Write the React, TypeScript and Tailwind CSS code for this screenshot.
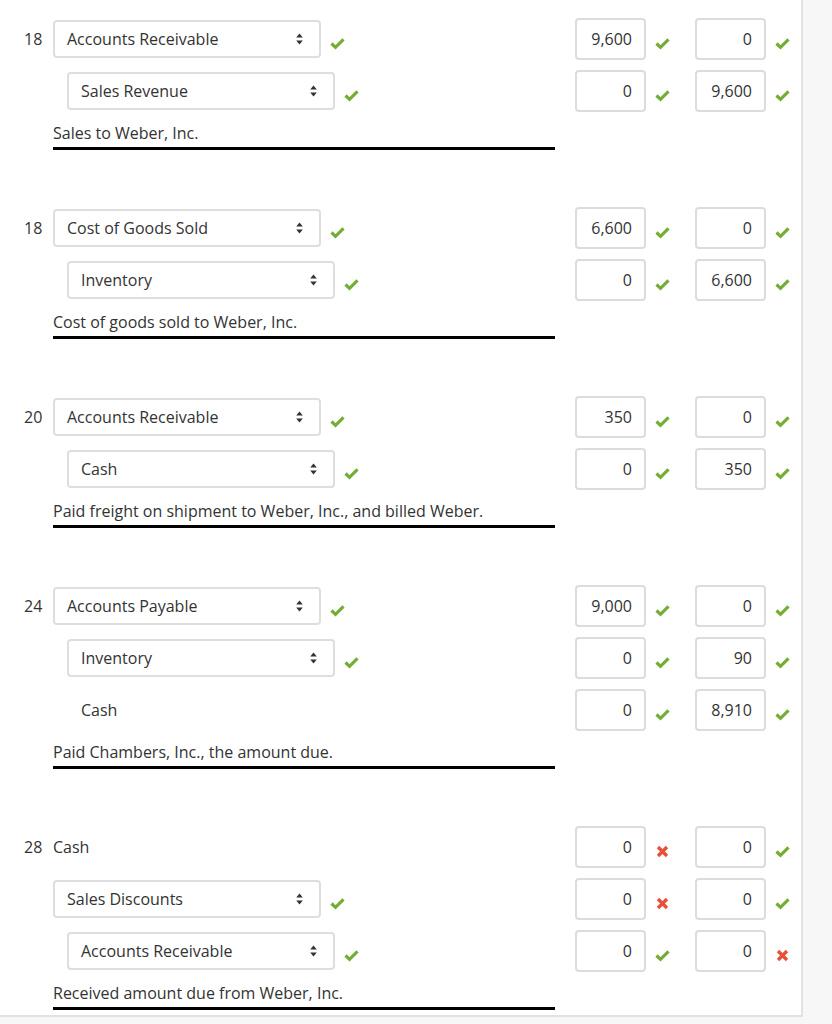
type Mark = "ok" | "bad";

type Line = {
  account: string;
  indent?: boolean;
  select?: boolean;
  accountMark?: Mark;
  debit: string;
  debitMark: Mark;
  credit: string;
  creditMark: Mark;
};

type Entry = {
  date: string;
  lines: Line[];
  note: string;
};

const entries: Entry[] = [
  {
    date: "18",
    note: "Sales to Weber, Inc.",
    lines: [
      { account: "Accounts Receivable", select: true, accountMark: "ok", debit: "9,600", debitMark: "ok", credit: "0", creditMark: "ok" },
      { account: "Sales Revenue", indent: true, select: true, accountMark: "ok", debit: "0", debitMark: "ok", credit: "9,600", creditMark: "ok" },
    ],
  },
  {
    date: "18",
    note: "Cost of goods sold to Weber, Inc.",
    lines: [
      { account: "Cost of Goods Sold", select: true, accountMark: "ok", debit: "6,600", debitMark: "ok", credit: "0", creditMark: "ok" },
      { account: "Inventory", indent: true, select: true, accountMark: "ok", debit: "0", debitMark: "ok", credit: "6,600", creditMark: "ok" },
    ],
  },
  {
    date: "20",
    note: "Paid freight on shipment to Weber, Inc., and billed Weber.",
    lines: [
      { account: "Accounts Receivable", select: true, accountMark: "ok", debit: "350", debitMark: "ok", credit: "0", creditMark: "ok" },
      { account: "Cash", indent: true, select: true, accountMark: "ok", debit: "0", debitMark: "ok", credit: "350", creditMark: "ok" },
    ],
  },
  {
    date: "24",
    note: "Paid Chambers, Inc., the amount due.",
    lines: [
      { account: "Accounts Payable", select: true, accountMark: "ok", debit: "9,000", debitMark: "ok", credit: "0", creditMark: "ok" },
      { account: "Inventory", indent: true, select: true, accountMark: "ok", debit: "0", debitMark: "ok", credit: "90", creditMark: "ok" },
      { account: "Cash", indent: true, debit: "0", debitMark: "ok", credit: "8,910", creditMark: "ok" },
    ],
  },
  {
    date: "28",
    note: "Received amount due from Weber, Inc.",
    lines: [
      { account: "Cash", debit: "0", debitMark: "bad", credit: "0", creditMark: "ok" },
      { account: "Sales Discounts", select: true, accountMark: "ok", debit: "0", debitMark: "bad", credit: "0", creditMark: "ok" },
      { account: "Accounts Receivable", indent: true, select: true, accountMark: "ok", debit: "0", debitMark: "ok", credit: "0", creditMark: "bad" },
    ],
  },
];

function MarkIcon({ mark }: { mark: Mark }) {
  if (mark === "bad") {
    return (
      <svg width="15" height="15" viewBox="0 0 15 15" className="ml-[9px] mt-[8px] shrink-0" aria-hidden="true">
        <path d="M3 3 L12 12 M12 3 L3 12" stroke="#e8503a" strokeWidth="3.4" strokeLinecap="butt" fill="none" />
      </svg>
    );
  }
  return (
    <svg width="15" height="13" viewBox="0 0 15 13" className="ml-[9px] mt-[8px] shrink-0" aria-hidden="true">
      <path d="M1.5 6.5 L5.5 10.3 L13.5 2.3" stroke="#74ad34" strokeWidth="3.2" strokeLinecap="butt" strokeLinejoin="miter" fill="none" />
    </svg>
  );
}

function SortArrows() {
  return (
    <svg width="7" height="12" viewBox="0 0 7 12" aria-hidden="true">
      <path d="M3.5 0.5 L6.8 4.6 L0.2 4.6 Z" fill="#333" />
      <path d="M3.5 11.5 L6.8 7.4 L0.2 7.4 Z" fill="#333" />
    </svg>
  );
}

function AccountCell({ line }: { line: Line }) {
  if (!line.select) {
    return (
      <div className={`flex items-center ${line.indent ? "pl-[28px]" : ""}`}>
        <span>{line.account}</span>
      </div>
    );
  }
  return (
    <div className={`flex items-center ${line.indent ? "pl-[14px]" : ""}`}>
      <div className="flex h-[38px] w-[268px] items-center justify-between rounded-[4px] border-2 border-[#dedede] bg-white pl-[12px] pr-[16px]">
        <span>{line.account}</span>
        <SortArrows />
      </div>
      {line.accountMark ? <MarkIcon mark={line.accountMark} /> : null}
    </div>
  );
}

function AmountCell({ value, mark }: { value: string; mark: Mark }) {
  return (
    <div className="flex w-[120px] shrink-0 items-center">
      <div className="flex h-[42px] w-[71px] shrink-0 items-center justify-end rounded-[4px] border-2 border-[#dcdcdc] bg-white pr-[12px]">
        {value}
      </div>
      <MarkIcon mark={mark} />
    </div>
  );
}

function JournalEntry({ entry }: { entry: Entry }) {
  return (
    <div className="mb-[57px]">
      <div className="flex flex-col gap-[10px]">
        {entry.lines.map((line, i) => (
          <div key={i} className="flex h-[42px] items-center">
            <div className="w-[29px] shrink-0">{i === 0 ? entry.date : ""}</div>
            <div className="w-[522px] shrink-0">
              <AccountCell line={line} />
            </div>
            <AmountCell value={line.debit} mark={line.debitMark} />
            <AmountCell value={line.credit} mark={line.creditMark} />
          </div>
        ))}
      </div>
      <div className="ml-[29px] w-[502px]">
        <p className="mt-[10px] leading-[22px]">{entry.note}</p>
        <div className="mt-[3px] h-[3px] bg-black" />
      </div>
    </div>
  );
}

export default function App() {
  return (
    <div className="min-h-[1024px] w-[832px] bg-[#f7f7f7]">
      <div
        className="h-[1017px] w-[803px] overflow-hidden border-b-2 border-r-2 border-[#e2e2e2] bg-white pl-[24px] pt-[18px] text-[16px] text-[#333]"
        style={{ fontFamily: '"Open Sans", "Noto Sans", sans-serif' }}
      >
        {entries.map((entry, i) => (
          <JournalEntry key={i} entry={entry} />
        ))}
      </div>
    </div>
  );
}
